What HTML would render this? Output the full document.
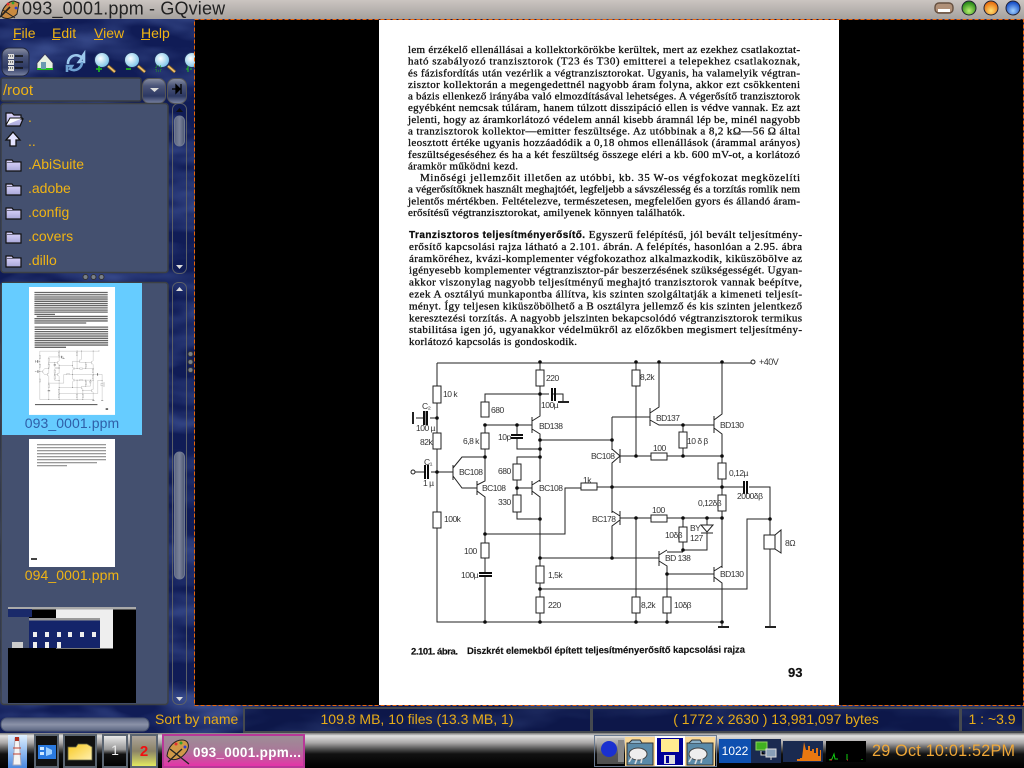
<!DOCTYPE html>
<html><head><meta charset="utf-8"><title>093_0001.ppm - GQview</title>
<style>
html,body{margin:0;padding:0;background:#000;width:1024px;height:768px;overflow:hidden}
svg{display:block;font-family:"Liberation Sans",sans-serif}
.pg{font-family:"Liberation Serif",serif;font-size:11px;fill:#111;stroke:#111;stroke-width:.3}
.lb{font-family:"Liberation Sans",sans-serif;font-size:8.5px;fill:#333;letter-spacing:-.5px}
.y{fill:#f0b414;font-size:14px}
.st{fill:#e8ac18;font-size:14px}
.c{fill:none;stroke:#222;stroke-width:1}
.r{fill:#fff;stroke:#222;stroke-width:1}
</style></head><body>
<svg width="1024" height="768" viewBox="0 0 1024 768" xmlns="http://www.w3.org/2000/svg">
<defs>
<linearGradient id="tb" x1="0" y1="0" x2="0" y2="1"><stop offset="0" stop-color="#cbc5c1"/><stop offset="1" stop-color="#a5a19e"/></linearGradient>
<linearGradient id="task" x1="0" y1="0" x2="0" y2="1"><stop offset="0" stop-color="#777"/><stop offset=".08" stop-color="#e0e0e0"/><stop offset=".28" stop-color="#aaa8a8"/><stop offset=".45" stop-color="#555"/><stop offset=".6" stop-color="#111"/><stop offset="1" stop-color="#000"/></linearGradient>
<linearGradient id="glass" x1="0" y1="0" x2="0" y2="1"><stop offset="0" stop-color="#8a90a4"/><stop offset=".3" stop-color="#4a5478"/><stop offset=".7" stop-color="#2c3862"/><stop offset="1" stop-color="#7d86a4"/></linearGradient>
<linearGradient id="thumb" x1="0" y1="0" x2="1" y2="0"><stop offset="0" stop-color="#59637f"/><stop offset=".5" stop-color="#7a829a"/><stop offset="1" stop-color="#4c5672"/></linearGradient>
<linearGradient id="hpill" x1="0" y1="0" x2="0" y2="1"><stop offset="0" stop-color="#596380"/><stop offset=".5" stop-color="#8b92a8"/><stop offset="1" stop-color="#5a6480"/></linearGradient>
<linearGradient id="pink" x1="0" y1="0" x2="0" y2="1"><stop offset="0" stop-color="#9c8f96"/><stop offset=".45" stop-color="#a87a98"/><stop offset="1" stop-color="#e830a8"/></linearGradient>
<linearGradient id="d1" x1="0" y1="0" x2="0" y2="1"><stop offset="0" stop-color="#f0f0f0"/><stop offset=".45" stop-color="#999"/><stop offset=".6" stop-color="#111"/><stop offset="1" stop-color="#000"/></linearGradient>
<linearGradient id="d2" x1="0" y1="0" x2="0" y2="1"><stop offset="0" stop-color="#b0a8a0"/><stop offset=".5" stop-color="#8a8266"/><stop offset="1" stop-color="#e8f060"/></linearGradient>
<linearGradient id="fold" x1="0" y1="0" x2="0" y2="1"><stop offset="0" stop-color="#e0d8ff"/><stop offset="1" stop-color="#a8a8d8"/></linearGradient>
<linearGradient id="yf" x1="0" y1="0" x2="1" y2="1"><stop offset="0" stop-color="#f8c820"/><stop offset="1" stop-color="#fff0b0"/></linearGradient>
<linearGradient id="light" x1="0" y1="0" x2="0" y2="1"><stop offset="0" stop-color="#dff0ff"/><stop offset="1" stop-color="#4a88e0"/></linearGradient>
<radialGradient id="gr" cx=".5" cy=".7" r=".6"><stop offset="0" stop-color="#b8f070"/><stop offset="1" stop-color="#2a8a18"/></radialGradient>
<radialGradient id="or" cx=".5" cy=".7" r=".6"><stop offset="0" stop-color="#ffe070"/><stop offset="1" stop-color="#e87010"/></radialGradient>
<radialGradient id="bl" cx=".5" cy=".7" r=".6"><stop offset="0" stop-color="#a0d0ff"/><stop offset="1" stop-color="#1850c8"/></radialGradient>
<radialGradient id="lens" cx=".4" cy=".4" r=".6"><stop offset="0" stop-color="#fff"/><stop offset="1" stop-color="#7cc4e8"/></radialGradient>
<filter id="tex" x="0" y="0" width="100%" height="100%"><feTurbulence type="fractalNoise" baseFrequency="0.012 0.035" numOctaves="3" seed="7"/><feColorMatrix values="0 0 0 0 .09  0 0 0 0 .15  0 0 0 0 .44  1.5 0 0 0 -.6"/></filter>
<filter id="soft"><feGaussianBlur stdDeviation=".35"/></filter>
<filter id="thb"><feGaussianBlur stdDeviation="1.6"/></filter>
<g id="cwires">
<path class="c" d="M437 363H753M437 363V622H723M437 386M413 472H425M431 472H453M416 418H424M430 418H437M453 465V480M453 472M453 468L462 457H485M453 476L462 488H477M477 481V495M477 485L485 481V425M477 491L485 497V534V543M485 558V573M485 577V622M485 417V394H540M485 425H532M532 417V433M532 421L540 416V363M532 429L540 434V482M517 425V435M517 439V449H540M540 440H612M540 457H517V464M517 480V495M517 488H532M532 481V495M532 485L540 480M532 491L540 497V566M517 512V519H540M540 583V597M540 613V622M485 534H565V488H581M597 487H745M749 487H770V535M540 558H659M540 589H747V519H770M612 417V450M612 417H650M650 408V426M650 413L659 407V363M650 420L659 425H714M714 416V433M714 420L722 414V363M714 428L722 434V463M683 425V432M683 448V456M620 449V463M620 456L612 449M620 456L612 463V487M620 456H651M667 456H722M636 363V370M636 386V456M722 479V495M722 511V568M612 487V513M620 511V525M620 516L612 511M620 520L612 526V558M620 518H651M667 518H722M636 518V597M636 613V622M683 518V527M683 542V550M707 518V525M707 533V550H683M667 552H683M659 551V566M659 555L667 550M659 561L667 566V597M667 574H714M714 567V582M714 571L722 566M714 577L722 583V627M667 613V622M718 627H729M770 549V627M765 627H776M553 394H563V401M540 394H549M558 402H569M425 411V425M431 411M485 449V425M485 433M413 412V424"/>
<path d="M718 627H729M765 627H776M558 402H569M413 412V424" stroke="#222" stroke-width="2" fill="none"/>
<g class="r"><rect x="433" y="386" width="8" height="17"/><rect x="433" y="433" width="8" height="16"/><rect x="433" y="512" width="8" height="16"/><rect x="481" y="402" width="8" height="15"/><rect x="481" y="433" width="8" height="16"/><rect x="481" y="543" width="8" height="15"/><rect x="536" y="370" width="8" height="16"/><rect x="513" y="464" width="8" height="16"/><rect x="513" y="495" width="8" height="17"/><rect x="536" y="566" width="8" height="17"/><rect x="536" y="597" width="8" height="16"/><rect x="581" y="483" width="16" height="7"/><rect x="632" y="370" width="8" height="16"/><rect x="651" y="453" width="16" height="7"/><rect x="679" y="432" width="8" height="16"/><rect x="718" y="463" width="8" height="16"/><rect x="718" y="495" width="8" height="16"/><rect x="651" y="515" width="16" height="7"/><rect x="679" y="527" width="8" height="15"/><rect x="632" y="597" width="8" height="16"/><rect x="663" y="597" width="8" height="16"/><rect x="764" y="535" width="11" height="14"/></g>
<path class="r" d="M775 535L781 530V553L775 549Z"/>
<path d="M701 525H713L707 532Z" fill="#fff" stroke="#222"/><path d="M701 533H713" stroke="#222"/>
<path d="M424 411V425M427 411V425M425 465V479M428 465V479M552 388V401M555 388V401M511 435H523M511 438H523M479 573H492M479 576H492M744 481V494M747 481V494" stroke="#111" stroke-width="2" fill="none"/>
<g fill="#111"><circle cx="437" cy="418" r="1.8"/><circle cx="437" cy="472" r="1.8"/><circle cx="485" cy="425" r="1.8"/><circle cx="485" cy="457" r="1.8"/><circle cx="517" cy="425" r="1.8"/><circle cx="540" cy="362" r="1.8"/><circle cx="540" cy="394" r="1.8"/><circle cx="540" cy="440" r="1.8"/><circle cx="540" cy="449" r="1.8"/><circle cx="540" cy="457" r="1.8"/><circle cx="517" cy="488" r="1.8"/><circle cx="540" cy="519" r="1.8"/><circle cx="485" cy="534" r="1.8"/><circle cx="540" cy="558" r="1.8"/><circle cx="540" cy="589" r="1.8"/><circle cx="485" cy="622" r="1.8"/><circle cx="540" cy="622" r="1.8"/><circle cx="612" cy="440" r="1.8"/><circle cx="612" cy="487" r="1.8"/><circle cx="612" cy="558" r="1.8"/><circle cx="636" cy="362" r="1.8"/><circle cx="636" cy="456" r="1.8"/><circle cx="636" cy="518" r="1.8"/><circle cx="659" cy="362" r="1.8"/><circle cx="722" cy="362" r="1.8"/><circle cx="683" cy="425" r="1.8"/><circle cx="683" cy="456" r="1.8"/><circle cx="722" cy="456" r="1.8"/><circle cx="722" cy="487" r="1.8"/><circle cx="683" cy="518" r="1.8"/><circle cx="707" cy="518" r="1.8"/><circle cx="722" cy="518" r="1.8"/><circle cx="683" cy="550" r="1.8"/><circle cx="667" cy="574" r="1.8"/><circle cx="636" cy="622" r="1.8"/><circle cx="667" cy="622" r="1.8"/><circle cx="722" cy="622" r="1.8"/><circle cx="770" cy="519" r="1.8"/></g>
<circle cx="413" cy="472" r="2" fill="#fff" stroke="#222"/><circle cx="753" cy="362" r="2" fill="#fff" stroke="#222"/>
</g>
<g id="tstrips">
<path d="M408 46h392v7H408zM408 58h392v7H408zM408 70h392v7H408zM408 81h392v7H408zM408 93h392v7H408zM408 105h392v7H408zM408 116h392v7H408zM408 128h392v7H408zM408 140h392v7H408zM408 151h392v7H408zM408 163h110v7H408zM420 174h380v7H420zM408 186h392v7H408zM408 198h392v7H408zM408 209h277v7H408zM409 231h393v7H409zM409 243h393v7H409zM409 255h393v7H409zM409 267h393v7H409zM409 279h393v7H409zM409 291h393v7H409zM409 303h393v7H409zM409 315h393v7H409zM409 327h393v7H409zM409 339h168v7H409zM411 646h334v6H411zM789 668h13v10H789z" fill="#333" fill-opacity=".75"/>
</g>
<g id="thumbpage"><rect x="379" y="20" width="460" height="684" fill="#fff"/><g filter="url(#thb)"><use href="#tstrips"/></g><use href="#cwires" opacity=".8"/></g>
<g id="mag"><path d="M6 6L13 12" stroke="#7a5a20" stroke-width="3.4"/><path d="M6 6L13 12" stroke="#f0c070" stroke-width="1.8"/><circle cx="0" cy="0" r="7.500" fill="url(#lens)" stroke="#203060" stroke-width="1"/></g>
<g id="dirf"><path d="M0 2h6l1.5 2H15v9H0z" fill="url(#fold)" stroke="#111" stroke-width="1.2"/><path d="M1 4.5h13" stroke="#6a6a80"/></g>
<g id="cloudf"><rect x="1" y="5" width="26" height="22" fill="#5a8aa8" stroke="#333"/><path d="M3 5l3-3h8l2 3" fill="#8ab0c8" stroke="#333"/><ellipse cx="12" cy="16" rx="9" ry="6" fill="#eee" stroke="#444"/><path d="M6 19l-3 5M11 21l-2 5M16 20l-1 5" stroke="#ddd" stroke-width="1.6"/></g>
</defs>

<!-- background -->
<rect width="1024" height="768" fill="#101c56"/>
<rect y="19" width="1024" height="714" filter="url(#tex)"/>

<!-- title bar -->
<rect width="1024" height="19" fill="url(#tb)"/>
<text x="22" y="14.500" font-size="18" fill="#222" letter-spacing=".15">093_0001.ppm - GQview</text>
<g>
<path d="M1 16C2 8 8 1 14 1L19 3L17 14C12 19 5 20 1 16Z" fill="#c88a40" stroke="#222"/>
<circle cx="8" cy="4" r="1.4" fill="#e03030"/><circle cx="13" cy="3" r="1.4" fill="#30a030"/><circle cx="16" cy="8" r="1.4" fill="#3040d0"/><path d="M0 17L10 7" stroke="#222" stroke-width="1.6"/><path d="M3 10L15 18" stroke="#222"/>
</g>
<rect x="935" y="3" width="18" height="10" rx="4" fill="#b09078" stroke="#665040" stroke-width="1.4"/><rect x="938" y="9" width="12" height="3" fill="#fff"/>
<circle cx="969" cy="8" r="7" fill="url(#gr)" stroke="#223" stroke-width="1"/>
<circle cx="991" cy="8" r="7" fill="url(#or)" stroke="#223" stroke-width="1"/>
<circle cx="1013" cy="8" r="7" fill="url(#bl)" stroke="#223" stroke-width="1"/>

<!-- menu -->
<g class="y" fill="#f0b414">
<text x="13" y="38" class="y">File</text><text x="52" y="38" class="y">Edit</text><text x="94" y="38" class="y">View</text><text x="141" y="38" class="y">Help</text>
</g>
<path d="M13 39.5h8M52 39.5h8M94 39.5h9M141 39.5h9" stroke="#f0b414"/>

<!-- toolbar -->
<rect x="2" y="48" width="27" height="28" rx="7" fill="url(#glass)" stroke="#222840"/>
<g fill="#ddd"><rect x="8" y="54" width="6" height="5"/><rect x="8" y="60" width="6" height="5"/><rect x="8" y="66" width="6" height="5"/></g><path d="M8 56h6M8 62h6M8 68h6" stroke="#111" stroke-dasharray="1 1"/><path d="M15 56h8M15 62h8M15 68h8" stroke="#111" stroke-width="1.4"/>
<path d="M37 63L45 54L53 63V70H37Z" fill="#e8f0e0" stroke="#335" stroke-width=".8"/><path d="M37 69h16" stroke="#20c020" stroke-width="2"/><rect x="41" y="62" width="5" height="7" fill="#6a9ab0"/>
<path d="M68 64A8 8 0 0 1 82 58L79 62H84V54L82 57" fill="none" stroke="#9cc8ec" stroke-width="2.6"/><path d="M82 62A8 8 0 0 1 70 69L72 66H67V72" fill="none" stroke="#6ea0d0" stroke-width="2.6"/>
<use href="#mag" x="102" y="60"/><use href="#mag" x="132" y="60"/><use href="#mag" x="162" y="60"/>
<path d="M96 69h6M99 66v6" stroke="#20c020" stroke-width="1.6"/><path d="M126 69h5" stroke="#20c020" stroke-width="1.6"/><rect x="156" y="66" width="5" height="5" fill="none" stroke="#20a020" stroke-dasharray="1 1"/>
<use href="#mag" x="192" y="60"/><path d="M186 69h2M190 69h2M188 66v6" stroke="#20c020"/>

<!-- path entry -->
<rect x="1" y="78" width="140" height="23" rx="2" fill="#44506f" stroke="#383c40" stroke-width="1.5"/>
<text x="3" y="95" class="y" style="font-size:15px">/root</text>
<rect x="142.500" y="78.500" width="23" height="25" rx="7" fill="url(#glass)" stroke="#555"/><path d="M150 88h9l-4.500 4z" fill="#ddd"/>
<rect x="167.500" y="78.500" width="19" height="25" rx="7" fill="url(#glass)" stroke="#555"/><path d="M172 89h6M176 85l4 4-4 4zM181 84v10" stroke="#000" stroke-width="1.300" fill="#000"/>

<!-- dir list -->
<rect x="1" y="103.500" width="167" height="169" rx="3" fill="#44506f" stroke="#3c4044" stroke-width="1.500"/>
<path d="M6 113h6l2 2h7v4h2l-3 7H6z" fill="url(#fold)" stroke="#111" stroke-width="1.200"/><path d="M6 125l4-7h13" fill="#fff" stroke="#111"/>
<path d="M13 132l7 8h-4v6h-6v-6H6z" fill="#e4e4ff" stroke="#111" stroke-width="1.300"/>
<use href="#dirf" x="6" y="158"/><use href="#dirf" x="6" y="182"/><use href="#dirf" x="6" y="206"/><use href="#dirf" x="6" y="230"/><use href="#dirf" x="6" y="254"/>
<g><text x="28" y="122" class="y">.</text><text x="28" y="146" class="y">..</text><text x="28" y="169" class="y">.AbiSuite</text><text x="28" y="193" class="y">.adobe</text><text x="28" y="217" class="y">.config</text><text x="28" y="241" class="y">.covers</text><text x="28" y="265" class="y">.dillo</text></g>
<rect x="172.500" y="103.500" width="14" height="170" rx="6" fill="none" stroke="#5c6068" stroke-width="1"/>
<path d="M176 112h7l-3.500-4z" fill="#111"/><rect x="174.500" y="116" width="10" height="30" rx="5" fill="url(#thumb)" stroke="#6f7890"/>
<path d="M176 265h7l-3.500 4z" fill="#ddd"/>
<g fill="#7a8088" stroke="#333"><circle cx="85.500" cy="277" r="2.500"/><circle cx="93.500" cy="277" r="2.500"/><circle cx="101.500" cy="277" r="2.500"/><circle cx="190.500" cy="354" r="2.500"/><circle cx="190.500" cy="362" r="2.500"/><circle cx="190.500" cy="370" r="2.500"/></g>

<!-- thumb list -->
<rect x="1" y="282.500" width="167" height="422" rx="3" fill="#44506f" stroke="#3c4044" stroke-width="1.500"/>
<rect x="2" y="283" width="140" height="152" fill="#66ccff"/>
<g transform="translate(29 287) scale(.187) translate(-379 -20)"><use href="#thumbpage"/></g>
<text x="72" y="428" text-anchor="middle" font-size="14" fill="#2f5fa8" letter-spacing=".1">093_0001.ppm</text>
<rect x="29" y="439" width="86" height="128" fill="#fff"/>
<g fill="#999"><rect x="37" y="444" width="69" height="1.300"/><rect x="37" y="447" width="69" height="1.300"/><rect x="37" y="450" width="69" height="1.300"/><rect x="37" y="453" width="69" height="1.300"/><rect x="37" y="456" width="69" height="1.300"/><rect x="37" y="459" width="69" height="1.300"/><rect x="37" y="462" width="60" height="1.300"/><rect x="37" y="465" width="30" height="1.300"/></g>
<rect x="31" y="558" width="6" height="2" fill="#444"/>
<text x="72" y="580" text-anchor="middle" font-size="14" fill="#f0b414" letter-spacing=".1">094_0001.ppm</text>
<rect x="8" y="607" width="128" height="96" fill="#000"/>
<rect x="8" y="607" width="128" height="2.500" fill="#aaa"/>
<rect x="8" y="609" width="24" height="8" fill="#1a2a6a"/><rect x="56" y="609.500" width="57" height="39" fill="#eee"/>
<rect x="8" y="617" width="21" height="25" fill="#44506f"/><rect x="8" y="642" width="21" height="6" fill="#44506f"/><rect x="29" y="618" width="71" height="30" fill="#14246a"/><rect x="29" y="618" width="71" height="2.500" fill="#999"/>
<rect x="12" y="642" width="11" height="6" fill="#ccc"/><rect x="33" y="632" width="4" height="5" fill="#eee"/><rect x="45" y="632" width="4" height="5" fill="#eee"/><rect x="57" y="632" width="4" height="5" fill="#eee"/><rect x="68" y="632" width="4" height="5" fill="#eee"/><rect x="80" y="632" width="4" height="5" fill="#eee"/><rect x="92" y="632" width="4" height="5" fill="#eee"/><rect x="33" y="642" width="4" height="6" fill="#eee"/><rect x="45" y="642" width="4" height="6" fill="#eee"/><rect x="57" y="642" width="4" height="6" fill="#eee"/>
<rect x="172.500" y="282.500" width="14" height="422" rx="6" fill="none" stroke="#5c6068"/>
<path d="M176 291h7l-3.500-4z" fill="#ddd"/><path d="M176 697h7l-3.500 4z" fill="#ddd"/>
<rect x="174.500" y="452" width="10" height="127" rx="5" fill="url(#thumb)" stroke="#6f7890"/>

<!-- viewer -->
<rect x="195" y="20" width="828" height="685" fill="#000"/>
<rect x="379" y="20" width="460" height="685" fill="#fff"/>
<rect x="194.500" y="19.500" width="829" height="686" fill="none" stroke="#e8660c" stroke-dasharray="4 2"/>

<!-- page text -->
<g class="pg" filter="url(#soft)">
<text x="408" y="53" textLength="392">lem érzékelő ellenállásai a kollektorkörökbe kerültek, mert az ezekhez csatlakoztat-</text>
<text x="408" y="64.600" textLength="392">ható szabályozó tranzisztorok (T23 és T30) emitterei a telepekhez csatlakoznak,</text>
<text x="408" y="76.300" textLength="392">és fázisfordítás után vezérlik a végtranzisztorokat. Ugyanis, ha valamelyik végtran-</text>
<text x="408" y="87.900" textLength="392">zisztor kollektorán a megengedettnél nagyobb áram folyna, akkor ezt csökkenteni</text>
<text x="408" y="99.600" textLength="392">a bázis ellenkező irányába való elmozdításával lehetséges. A végerősítő tranzisztorok</text>
<text x="408" y="111.200" textLength="392">egyébként nemcsak túláram, hanem túlzott disszipáció ellen is védve vannak. Ez azt</text>
<text x="408" y="122.800" textLength="392">jelenti, hogy az áramkorlátozó védelem annál kisebb áramnál lép be, minél nagyobb</text>
<text x="408" y="134.500" textLength="392">a tranzisztorok kollektor—emitter feszültsége. Az utóbbinak a 8,2 kΩ—56 Ω által</text>
<text x="408" y="146.100" textLength="392">leosztott értéke ugyanis hozzáadódik a 0,18 ohmos ellenállások (árammal arányos)</text>
<text x="408" y="157.800" textLength="392">feszültségeséséhez és ha a két feszültség összege eléri a kb. 600 mV-ot, a korlátozó</text>
<text x="408" y="169.400" textLength="110">áramkör működni kezd.</text>
<text x="420" y="181" textLength="380">Minőségi jellemzőit illetően az utóbbi, kb. 35 W-os végfokozat megközelíti</text>
<text x="408" y="192.600" textLength="392">a végerősítőknek használt meghajtóét, legfeljebb a sávszélesség és a torzítás romlik nem</text>
<text x="408" y="204.300" textLength="392">jelentős mértékben. Feltételezve, természetesen, megfelelően gyors és állandó áram-</text>
<text x="408" y="216" textLength="277">erősítésű végtranzisztorokat, amilyenek könnyen találhatók.</text>
<text x="409" y="238" textLength="393"><tspan font-weight="bold" font-family="Liberation Sans" font-size="10">Tranzisztoros teljesítményerősítő.</tspan> Egyszerű felépítésű, jól bevált teljesítmény-</text>
<text x="409" y="249.900" textLength="393">erősítő kapcsolási rajza látható a 2.101. ábrán. A felépítés, hasonlóan a 2.95. ábra</text>
<text x="409" y="261.800" textLength="393">áramköréhez, kvázi-komplementer végfokozathoz alkalmazkodik, kiküszöbölve az</text>
<text x="409" y="273.700" textLength="393">igényesebb komplementer végtranzisztor-pár beszerzésének szükségességét. Ugyan-</text>
<text x="409" y="285.600" textLength="393">akkor viszonylag nagyobb teljesítményű meghajtó tranzisztorok vannak beépítve,</text>
<text x="409" y="297.500" textLength="393">ezek A osztályú munkapontba állítva, kis szinten szolgáltatják a kimeneti teljesít-</text>
<text x="409" y="309.400" textLength="393">ményt. Így teljesen kiküszöbölhető a B osztályra jellemző és kis szinten jelentkező</text>
<text x="409" y="321.300" textLength="393">keresztezési torzítás. A nagyobb jelszinten bekapcsolódó végtranzisztorok termikus</text>
<text x="409" y="333.200" textLength="393">stabilitása igen jó, ugyanakkor védelmükről az előzőkben megismert teljesítmény-</text>
<text x="409" y="345.100" textLength="168">korlátozó kapcsolás is gondoskodik.</text>
</g>

<!-- circuit -->
<use href="#cwires" filter="url(#soft)"/>
<g class="lb" filter="url(#soft)">
<text x="443" y="397">10 k</text><text x="422" y="409">C₂</text><text x="416" y="431">100 µ</text><text x="420" y="445">82k</text><text x="424" y="465">C₁</text><text x="423" y="486">1 µ</text>
<text x="459" y="475">BC108</text><text x="482" y="491">BC108</text><text x="463" y="444">6,8 k</text><text x="491" y="413">680</text><text x="546" y="381">220</text><text x="541" y="408">100µ</text><text x="539" y="429">BD138</text><text x="498" y="440">10p</text><text x="498" y="474">680</text><text x="539" y="491">BC108</text><text x="498" y="505">330</text><text x="444" y="522">100k</text><text x="464" y="554">100</text><text x="461" y="578">100µ</text><text x="548" y="578">1,5k</text><text x="548" y="608">220</text><text x="583" y="483">1k</text>
<text x="759" y="365" font-size="9">+40V</text><text x="640" y="380">8,2k</text><text x="656" y="421">BD137</text><text x="720" y="428">BD130</text><text x="687" y="444">10 δ β</text><text x="653" y="451">100</text><text x="591" y="459">BC108</text><text x="729" y="476">0,12µ</text><text x="737" y="499">2000δβ</text><text x="698" y="506">0,12δβ</text><text x="592" y="522">BC178</text><text x="652" y="513">100</text><text x="665" y="538">10δβ</text><text x="690" y="531">BY</text><text x="690" y="541">127</text><text x="665" y="561">BD 138</text><text x="720" y="577">BD130</text><text x="785" y="546">8Ω</text><text x="641" y="608">8,2k</text><text x="674" y="608">10δβ</text>
</g>
<g font-family="Liberation Sans" font-size="9.500" font-weight="bold" fill="#111" stroke="#111" stroke-width=".15">
<text x="411" y="654.500" textLength="47">2.101. ábra.</text>
<text x="467" y="654" textLength="278" transform="rotate(-.3 467 654)">Diszkrét elemekből épített teljesítményerősítő kapcsolási rajza</text>
</g>
<text x="788" y="677" font-family="Liberation Sans" font-size="13" font-weight="bold" fill="#111" stroke="#111" stroke-width=".2">93</text>

<!-- status row -->
<rect x="1" y="718" width="148" height="13" rx="6" fill="url(#hpill)" stroke="#4c5670"/>
<text x="155" y="724" class="st">Sort by name</text>
<g fill="#0b1440" fill-opacity=".55" stroke="#45494f" stroke-width="2"><rect x="244" y="708" width="347" height="24"/><rect x="592" y="708" width="368" height="24"/><rect x="961" y="708" width="62" height="24"/></g>
<text x="417" y="724" class="st" text-anchor="middle">109.8 MB, 10 files (13.3 MB, 1)</text>
<text x="776" y="724" class="st" text-anchor="middle">( 1772 x 2630 ) 13,981,097 bytes</text>
<text x="992" y="724" class="st" text-anchor="middle">1 : ~3.9</text>

<!-- taskbar -->
<rect y="733" width="1024" height="35" fill="url(#task)"/>
<rect x="8" y="735" width="19" height="33" fill="url(#light)"/>
<path d="M15 738h4l2 27h-8z" fill="#f4f4f4" stroke="#aab"/><rect x="15" y="737" width="4" height="4" fill="#b03020"/><path d="M13 748h8M13 754h8" stroke="#c04030"/>
<rect x="35" y="735" width="23" height="32" fill="#111" stroke="#5a6470" stroke-width="2"/>
<rect x="38" y="745" width="18" height="14" fill="#2a7ae0"/><path d="M40 747h4v3h-4zM40 752h4v3h-4z" fill="#cfe8ff"/><path d="M46 747l6 3v4l-6 2z" fill="#9fd0ff"/>
<rect x="64" y="735" width="32" height="32" fill="#111" stroke="#5a6470" stroke-width="2"/>
<path d="M68 747h8l2-3h9l5 3v13H68z" fill="url(#yf)" stroke="#664" stroke-width=".8"/>
<rect x="103" y="735" width="24" height="32" fill="url(#d1)" stroke="#5a6470" stroke-width="2"/><text x="115" y="755" text-anchor="middle" font-size="14" fill="#eee">1</text>
<rect x="131" y="735" width="26" height="32" fill="url(#d2)" stroke="#5a6470" stroke-width="2"/><text x="144" y="756" text-anchor="middle" font-size="15" font-weight="bold" fill="#f01010">2</text>
<rect x="163" y="735" width="141" height="32" fill="url(#pink)" stroke="#b83898" stroke-width="2"/>
<path d="M167 756C168 746 175 740 182 740C188 740 190 745 187 751C182 759 172 763 167 756Z" fill="#d09848" stroke="#222"/>
<circle cx="176" cy="744" r="1.500" fill="#e03030"/><circle cx="181" cy="743" r="1.500" fill="#30a030"/><circle cx="185" cy="747" r="1.500" fill="#3040d0"/><path d="M168 762L182 749M170 749L189 764" stroke="#222" stroke-width="1.300"/>
<text x="193" y="757" font-size="13.500" font-weight="bold" fill="#fff" textLength="108">093_0001.ppm...</text>

<!-- tray -->
<rect x="594.500" y="735.500" width="122" height="31" fill="none" stroke="#6a7a90"/>
<rect x="597" y="738" width="27" height="26" fill="#aaa" opacity=".45"/><circle cx="609" cy="749" r="8" fill="#1a30d0"/><rect x="618" y="740" width="6" height="22" fill="#888"/>
<rect x="625" y="737" width="30" height="29" fill="#f8d898"/><use href="#cloudf" x="626" y="738"/>
<rect x="655" y="736" width="30" height="30" fill="#fff"/><rect x="657" y="738" width="26" height="27" fill="#000098"/><rect x="661" y="739" width="18" height="13" fill="#ffeb90"/><rect x="664" y="755" width="11" height="9" fill="#ddd"/><rect x="666" y="756" width="3" height="7" fill="#000098"/>
<rect x="685" y="737" width="30" height="29" fill="#f8d898"/><use href="#cloudf" x="686" y="738"/>
<rect x="719" y="739" width="32" height="24" fill="#0e50b0"/><text x="735" y="755" text-anchor="middle" font-size="12" fill="#fff">1022</text>
<rect x="751" y="739" width="30" height="24" fill="#1a2a50"/>
<rect x="756" y="742" width="11" height="8" fill="#40b020" stroke="#90d060"/><rect x="766" y="749" width="10" height="8" fill="#8aa0b8" stroke="#ddd"/><path d="M761 751v4h5M771 757v3" stroke="#ddd"/>
<rect x="783" y="741" width="40" height="21" fill="#1a2a50"/>
<path d="M783 761h14v-2h3v-1h2l2-16 2 8h2v-4h2v5h2v-2h2v4h2v-5h2v8h2v-6h1v11z" fill="#e87810"/>
<rect x="826" y="741" width="40" height="21" fill="#000"/>
<path d="M829 760l3-1 2-5 1 5h3M847 760v-6M862 760v-1" stroke="#10d010" fill="none"/><path d="M830 760h2M847 760h1" stroke="#e02020"/>
<text x="872" y="756" font-size="16.200" fill="#f0a838" textLength="143">29 Oct 10:01:52PM</text>
</svg>
</body></html>
